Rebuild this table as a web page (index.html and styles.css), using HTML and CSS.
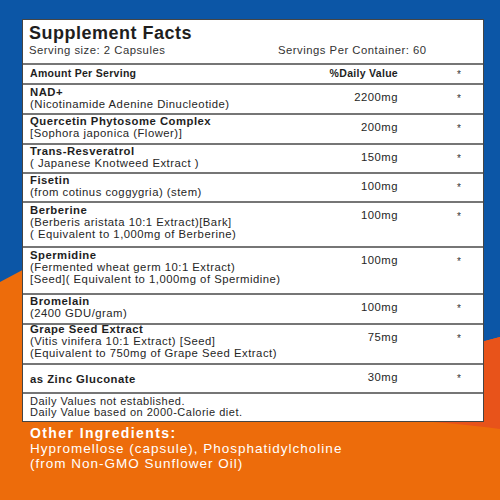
FILE: index.html
```html
<!DOCTYPE html>
<html lang="en">
<head>
<meta charset="utf-8">
<title>Supplement Facts</title>
<link rel="stylesheet" href="styles.css">
</head>
<body>
<svg class="bg" viewBox="0 0 500 500" width="500" height="500" aria-hidden="true">
  <rect width="500" height="500" fill="#0c56a6"/>
  <path d="M0,282 L30,266 L470,345 L500,337 L500,500 L0,500 Z" fill="#ed6c0b"/>
  <path d="M470,345 L500,337 L500,429 C470,425 440,422 405,420 L405,345 Z" fill="#e8531a"/>
</svg>

<main class="card">
  <header class="head">
    <h1 class="title">Supplement Facts</h1>
    <div class="serving">
      <span>Serving size: 2 Capsules</span>
      <span>Servings Per Container: 60</span>
    </div>
  </header>

  <div class="row row-head">
    <div class="name">Amount Per Serving</div>
    <div class="amt">%Daily Value</div>
    <div class="star">*</div>
  </div>

  <div class="row h28">
    <div class="name down"><div class="nm">NAD+</div><div>(Nicotinamide Adenine Dinucleotide)</div></div>
    <div class="amt">2200mg</div>
    <div class="star">*</div>
  </div>

  <div class="row h28">
    <div class="name"><div class="nm">Quercetin Phytosome Complex</div><div>[Sophora japonica (Flower)]</div></div>
    <div class="amt">200mg</div>
    <div class="star">*</div>
  </div>

  <div class="row h27">
    <div class="name"><div class="nm">Trans-Resveratrol</div><div>( Japanese Knotweed Extract )</div></div>
    <div class="amt">150mg</div>
    <div class="star">*</div>
  </div>

  <div class="row h27">
    <div class="name"><div class="nm">Fisetin</div><div>(from cotinus coggygria) (stem)</div></div>
    <div class="amt">100mg</div>
    <div class="star">*</div>
  </div>

  <div class="row h43">
    <div class="name down"><div class="nm">Berberine</div><div>(Berberis aristata 10:1 Extract)[Bark]</div><div>( Equivalent to 1,000mg of Berberine)</div></div>
    <div class="amt">100mg</div>
    <div class="star">*</div>
  </div>

  <div class="row h45">
    <div class="name down"><div class="nm">Spermidine</div><div>(Fermented wheat germ 10:1 Extract)</div><div>[Seed]( Equivalent to 1,000mg of Spermidine)</div></div>
    <div class="amt">100mg</div>
    <div class="star">*</div>
  </div>

  <div class="row h28">
    <div class="name"><div class="nm">Bromelain</div><div>(2400 GDU/gram)</div></div>
    <div class="amt">100mg</div>
    <div class="star">*</div>
  </div>

  <div class="row h38">
    <div class="name up"><div class="nm">Grape Seed Extract</div><div>(Vitis vinifera 10:1 Extract) [Seed]</div><div>(Equivalent to 750mg of Grape Seed Extract)</div></div>
    <div class="amt">75mg</div>
    <div class="star">*</div>
  </div>

  <div class="row h27">
    <div class="name mid"><div class="nm">as Zinc Gluconate</div></div>
    <div class="amt">30mg</div>
    <div class="star">*</div>
  </div>

  <div class="row foot">
    <div class="name"><div>Daily Values not established.</div><div>Daily Value based on 2000-Calorie diet.</div></div>
  </div>
</main>

<section class="other">
  <h2 class="other-title">Other Ingredients:</h2>
  <p class="other-text">Hypromellose (capsule), Phosphatidylcholine<br>(from Non-GMO Sunflower Oil)</p>
</section>
</body>
</html>
```

FILE: styles.css
```css
* { box-sizing: border-box; }

html, body {
  margin: 0;
  padding: 0;
}

body {
  position: relative;
  width: 500px;
  height: 500px;
  overflow: hidden;
  font-family: "Liberation Sans", Arial, sans-serif;
  color: #231f20;
  background: #0c56a6;
}

.bg {
  position: absolute;
  left: 0;
  top: 0;
  z-index: 0;
  display: block;
}

.card {
  position: relative;
  z-index: 1;
  margin: 19px 0 0 22px;
  width: 462px;
  height: 403px;
  background: #fff;
  border: 1px solid #454545;
}

.head {
  height: 43px;
  padding: 3px 0 0 6px;
}

.title {
  margin: 0;
  font-size: 18px;
  line-height: 20px;
  font-weight: bold;
  letter-spacing: 0.5px;
  color: #1e1e1e;
}

.serving {
  display: grid;
  grid-template-columns: 249px 1fr;
  font-size: 11.3px;
  line-height: 14px;
  letter-spacing: 0.5px;
  color: #333;
}

.row {
  display: grid;
  grid-template-columns: 1fr 75px 85px;
  border-top: 2px solid #767676;
  font-size: 11.3px;
  line-height: 12px;
  letter-spacing: 0.5px;
  box-sizing: content-box;
}

.name {
  padding-left: 7px;
  color: #262626;
}

.name.down { padding-top: 1px; }
.name.up { margin-top: -2px; }
.name.mid { align-self: center; }

.nm {
  font-weight: bold;
  color: #1e1e1e;
}

.amt {
  padding-top: 5.5px;
  text-align: right;
  white-space: nowrap;
  color: #262626;
}

.star {
  padding: 8px 0 0 59px;
  font-size: 10px;
  color: #333;
}

.row-head {
  height: 18px;
  font-size: 10.5px;
  letter-spacing: 0.3px;
  font-weight: bold;
}

.row-head .name,
.row-head .amt {
  padding-top: 1.5px;
  color: #1e1e1e;
}

.row-head .star {
  padding-top: 3.5px;
  font-weight: normal;
}

.h27 { height: 27px; }
.h28 { height: 28px; }
.h38 { height: 38px; }
.h43 { height: 43px; }
.h45 { height: 45px; }

.foot {
  height: 27px;
  line-height: 11px;
  font-size: 11px;
  letter-spacing: 0.5px;
}

.foot .name {
  padding-top: 1.5px;
}

.other {
  position: relative;
  z-index: 1;
  padding: 4px 0 0 30px;
  color: #fff;
}

.other-title {
  margin: 0;
  font-size: 14px;
  line-height: 15px;
  font-weight: bold;
  letter-spacing: 1.4px;
}

.other-text {
  margin: 0;
  font-size: 13.5px;
  line-height: 15px;
  letter-spacing: 1px;
}
```
